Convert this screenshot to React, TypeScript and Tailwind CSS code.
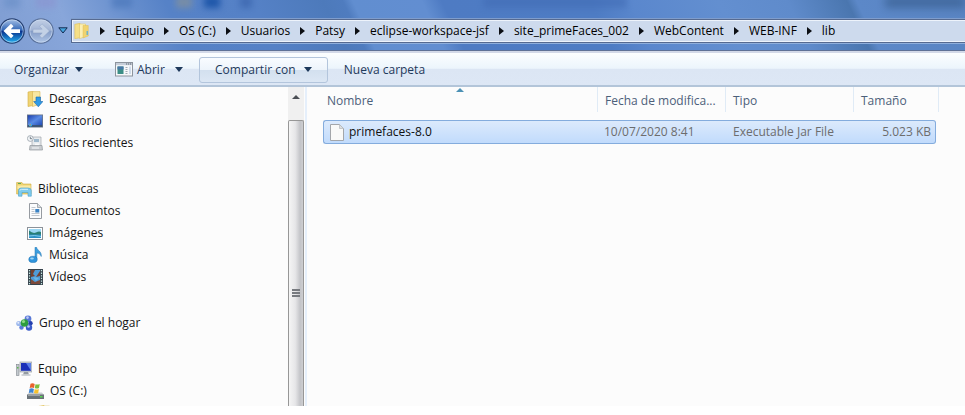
import { Fragment, type ReactNode } from "react";

const FolderIcon = () => (
  <svg viewBox="0 0 16 16" className="size-4 shrink-0" aria-hidden="true">
    <path d="M.8 1.300 L6 .3 V14.700 L.8 15.700Z" fill="#f5df86" stroke="#dcb94e" strokeWidth=".5" />
    <path d="M5.500 1 H11.500 V13.500 L5.500 15.700Z" fill="#fbefb4" stroke="#dfc05f" strokeWidth=".5" />
    <path d="M9 2.500 H14.300 V13 L9 15Z" fill="#f0d36f" stroke="#d8b54b" strokeWidth=".4" />
    <path d="M12.500 8 h1.500 v4 h-1.500z" fill="#6fb4c8" />
  </svg>
);

const DownloadsIcon = () => (
  <svg viewBox="0 0 16 16" className="size-4 shrink-0" aria-hidden="true">
    <path d="M1 1 L6 .2 V14.500 L1 15.500Z" fill="#f0d474" stroke="#d3ac42" strokeWidth=".6" />
    <path d="M5.500 .6 H13 V13 L5.500 15.600Z" fill="#f9e8a1" stroke="#d9b650" strokeWidth=".6" />
    <path d="M9 6 h4.500 v4.500 h2.400 L11.300 15.800 L6.700 10.500 H9z" fill="#2f9ae6" stroke="#1767ac" strokeWidth=".6" />
  </svg>
);

const DesktopIcon = () => (
  <svg viewBox="0 0 16 16" className="size-4 shrink-0" aria-hidden="true">
    <defs>
      <linearGradient id="desk" x1="0" y1="0" x2="1" y2="1">
        <stop offset="0" stopColor="#1c3fae" />
        <stop offset=".5" stopColor="#5a8be4" />
        <stop offset="1" stopColor="#1f49b4" />
      </linearGradient>
    </defs>
    <rect x="0" y="1.500" width="16" height="13" fill="#6b7788" />
    <rect x=".8" y="2.300" width="14.400" height="10.200" fill="url(#desk)" />
    <rect x=".8" y="12.200" width="14.400" height="1.600" fill="#36506f" />
    <circle cx="3.500" cy="12" r="1.600" fill="#37b6e8" />
    <circle cx="3.200" cy="11.800" r=".7" fill="#e9704a" />
  </svg>
);

const RecentIcon = () => (
  <svg viewBox="0 0 16 16" className="size-4 shrink-0" aria-hidden="true">
    <path d="M5 2 h9 v9 h-9z" fill="#e6eaed" stroke="#a1a8ae" strokeWidth=".7" />
    <path d="M7 4 h5 v3 h-5z" fill="#9db8cc" />
    <path d="M8 8.500 h4 v2 h-4z" fill="#f9fafb" />
    <path d="M3 10.500 h12 l.5 4.500 h-13z" fill="#c9cdd1" stroke="#94999e" strokeWidth=".7" />
    <path d="M5 13 h7" stroke="#f4f6f7" strokeWidth="1" />
    <circle cx="3.300" cy="3.500" r="2.900" fill="#f3f6f8" stroke="#98a1a9" strokeWidth=".8" />
    <path d="M3.300 1.700 V3.700 H5" fill="none" stroke="#46525e" strokeWidth=".7" />
  </svg>
);

const LibrariesIcon = () => (
  <svg viewBox="0 0 16 16" className="size-4 shrink-0" aria-hidden="true">
    <path d="M.6 1.500 H6 L7 3 H15 V13 H.6Z" fill="#efd36f" stroke="#cfac45" strokeWidth=".6" />
    <path d="M1.500 4.500 H14.500 V8 H1.500z" fill="#fbeaa5" />
    <path d="M2 2.500 h3" stroke="#61aa55" strokeWidth="1" />
    <path d="M2.500 15.200 V9.500 Q2.500 7 5 7 H12 Q15.300 7 15.300 9.500 V15.200 H12 V11.500 H6 V15.200Z" fill="#7fcbee" stroke="#4a9fc8" strokeWidth=".6" />
    <path d="M4 9.500 Q4 8.300 5.500 8.300 H12" fill="none" stroke="#d8f2fc" strokeWidth="1" />
  </svg>
);

const DocumentIcon = () => (
  <svg viewBox="0 0 16 16" className="size-4 shrink-0" aria-hidden="true">
    <path d="M2.500 .5 H10.500 L14.500 4.500 V15.500 H2.500Z" fill="#fbfcfd" stroke="#969ba1" strokeWidth="1" />
    <path d="M10.500 .5 V4.500 H14.500" fill="#d9dde2" stroke="#8b9096" strokeWidth=".7" />
    <path d="M4.500 4.500 h4 M4.500 6.500 h3 M4.500 8.500 h3 M4.500 10.500 h8 M4.500 12.500 h8" stroke="#b3b9c1" strokeWidth=".8" />
    <rect x="8.300" y="6" width="4" height="3.500" fill="#3a82c4" />
  </svg>
);

const PicturesIcon = () => (
  <svg viewBox="0 0 16 16" className="size-4 shrink-0" aria-hidden="true">
    <rect x=".5" y="2.500" width="15" height="12" fill="#fff" stroke="#8c9299" />
    <rect x="2" y="4" width="12" height="9" fill="#9bd7f3" />
    <path d="M2 5.500 Q6 9 9 7.500 T14 7 V10 H2z" fill="#2b7f74" />
    <path d="M2 9.500 H14 V13 H2z" fill="#2c8fc4" />
    <path d="M2 11 Q7 9.800 14 11.500" fill="none" stroke="#9adcf0" strokeWidth=".8" />
  </svg>
);

const MusicIcon = () => (
  <svg viewBox="0 0 16 16" className="size-4 shrink-0" aria-hidden="true">
    <path d="M8 .3 H9.600 C10 3.500 15 4.200 14.200 9.500 C13.600 7.200 12 6.200 9.800 6 V12.200 H8z" fill="#3d9fdf" stroke="#2274b1" strokeWidth=".5" />
    <ellipse cx="6" cy="12.400" rx="4.200" ry="3.200" fill="#2f94dc" stroke="#2070ad" strokeWidth=".5" />
    <ellipse cx="5" cy="11.400" rx="1.900" ry="1" fill="#9fd7f7" />
  </svg>
);

const VideosIcon = () => (
  <svg viewBox="0 0 16 16" className="size-4 shrink-0" aria-hidden="true">
    <rect x="1" y="0" width="15" height="16" fill="#38444d" />
    <rect x="4" y="1" width="9" height="14" fill="#4f9bd8" />
    <path d="M4 1 h4 l-2 4 2 2 -4 1z M13 2 v5 l-4 1z" fill="#75402f" />
    <path d="M4 10 l4 3 5-2 v4 h-9z" fill="#7c4a3a" />
    <path d="M6 8 l6 1 -3 3z" fill="#67b7e8" />
    <path d="M2.500 1 V16 M14.500 1 V16" stroke="#c4e5e2" strokeWidth="1.200" strokeDasharray="1.300 1.300" />
  </svg>
);

const HomegroupIcon = () => (
  <svg viewBox="0 0 17 16" className="h-4 w-[17px] shrink-0" aria-hidden="true">
    <circle cx="2.800" cy="8.500" r="2.600" fill="#9db8ec" />
    <circle cx="12" cy="3.800" r="3.400" fill="#5878d6" />
    <circle cx="14.500" cy="8.300" r="2.200" fill="#243fae" />
    <circle cx="13" cy="12.500" r="3.200" fill="#3c5cc9" />
    <circle cx="5.500" cy="12.500" r="2.200" fill="#5a7cd7" />
    <circle cx="8.500" cy="8" r="3.800" fill="#2e9d3e" />
    <circle cx="7.500" cy="6.500" r="1.600" fill="#8edb83" />
    <circle cx="11.500" cy="2.600" r="1.300" fill="#b9c9f5" />
    <circle cx="12.500" cy="11.500" r="1.300" fill="#b9c9f5" />
    <circle cx="2.300" cy="7.700" r="1" fill="#e3ebfb" />
  </svg>
);

const ComputerIcon = () => (
  <svg viewBox="0 0 16 16" className="size-4 shrink-0" aria-hidden="true">
    <rect x=".5" y="3.500" width="2.500" height="11" fill="#c3c9ce" stroke="#7f868d" strokeWidth=".6" />
    <rect x="1" y="6" width="1.500" height="1.500" fill="#5cb451" />
    <rect x="4" y="1" width="12" height="10" fill="#cfd4da" stroke="#8b929a" strokeWidth=".6" />
    <rect x="5" y="2" width="10" height="7.800" fill="#1a2fb8" />
    <path d="M10 2 h5 v7.800 z" fill="#5b7fe8" />
    <path d="M8 11 h4 l1 2.500 h-6z" fill="#949ba2" />
    <path d="M5.500 13.300 h9 v1.500 h-9z" fill="#c2c7cc" />
  </svg>
);

const DriveIcon = () => (
  <svg viewBox="0 0 17 17" className="size-[17px] shrink-0" aria-hidden="true">
    <path d="M2 9.500 H15 L17 12 H0z" fill="#c7ccd1" />
    <path d="M0 11.500 H17 V16 H0z" fill="#6a7278" />
    <path d="M1 12.500 h12" stroke="#a6adb2" strokeWidth=".8" />
    <rect x="13" y="13" width="2.500" height="1.500" fill="#55d650" />
    <path d="M3.500 .8 Q5.500 -.3 7.700 1 L7 5 Q5 3.900 2.700 5z" fill="#e8622c" />
    <path d="M8.500 1.200 Q10.500 2 12.700 1 L12 5 Q10 6 7.800 5z" fill="#7fbd3d" />
    <path d="M2.500 5.800 Q4.800 4.700 6.900 6 L6.200 10 Q4 8.900 1.800 10z" fill="#3f86d4" />
    <path d="M7.700 6 Q9.800 7 11.900 6 L11.200 10 Q9 11 7 10z" fill="#f5c12f" />
  </svg>
);

const AppIcon = () => (
  <svg viewBox="0 0 18 15" className="h-[15px] w-[18px] shrink-0" aria-hidden="true">
    <rect x=".5" y=".5" width="17" height="13.500" fill="#f6f8fa" stroke="#8c949d" />
    <rect x="1" y="1" width="16" height="2.200" fill="#c5ced9" />
    <path d="M11 2 h1.200 M13 2 h1.200 M15 2 h1.200" stroke="#58636f" strokeWidth="1" />
    <rect x="2.500" y="4.500" width="6" height="7.500" fill="#3b8e86" />
    <rect x="2.500" y="4.500" width="6" height="3" fill="#4777a6" />
    <path d="M10.500 5.500 h2 M10.500 7.500 h2 M10.500 9.500 h2 M10.500 11.500 h2" stroke="#8e98a3" strokeWidth=".8" />
    <rect x="14" y="4.500" width="2" height="7.500" fill="#cfdceb" />
  </svg>
);

const FileIcon = () => (
  <svg viewBox="0 0 14 17" className="h-[17px] w-[14px] shrink-0" aria-hidden="true">
    <path d="M.5 .5 H9.500 L13.500 4.500 V16.500 H.5Z" fill="#f9f9f8" stroke="#a3a6aa" />
    <path d="M9.500 .5 V4.500 H13.500Z" fill="#dcdedf" stroke="#b5b8bb" strokeWidth=".7" />
  </svg>
);

const NavButton = ({ label, active }: { label: string; active?: boolean }) => {
  const id = active ? "navBack" : "navForward";
  return (
    <button type="button" aria-label={label} className="shrink-0">
      <svg viewBox="0 0 26 26" className="size-[26px]" aria-hidden="true">
        <defs>
          <linearGradient id={id} x1="0" y1="0" x2="0" y2="1">
            <stop offset="0" stopColor={active ? "#a9c3e8" : "#c3d0e6"} />
            <stop offset=".46" stopColor={active ? "#3367b6" : "#a3b5d5"} />
            <stop offset=".52" stopColor={active ? "#0a3590" : "#859dc8"} />
            <stop offset="1" stopColor={active ? "#25b4f4" : "#b2c8e8"} />
          </linearGradient>
        </defs>
        <circle cx="13" cy="13" r="12.200" fill={`url(#${id})`} stroke={active ? "#263f70" : "#5a719b"} strokeWidth="1.200" />
        <circle cx="13" cy="13" r="11.200" fill="none" stroke="#d2e2f5" strokeOpacity=".65" strokeWidth=".9" />
        <path
          d={active ? "M4.500 13 L12 5.800 L14.500 8.300 L11.800 11.200 H21 V14.900 H11.800 L14.500 17.800 L12 20.200Z" : "M21.500 13 L14 5.800 L11.500 8.300 L14.200 11.200 H5 V14.900 H14.200 L11.500 17.800 L14 20.200Z"}
          fill={active ? "#fff" : "#c3d1e6"}
          stroke={active ? "none" : "#8ea2c5"}
          strokeWidth=".5"
        />
      </svg>
    </button>
  );
};

const Caret = () => (
  <svg viewBox="0 0 8 5" className="h-[5px] w-2 shrink-0" aria-hidden="true">
    <path d="M0 0 H8 L4 5Z" fill="#1e395b" />
  </svg>
);

const Chevron = () => (
  <svg viewBox="0 0 5 8" className="h-2 w-[5px] shrink-0" aria-hidden="true">
    <path d="M0 0 L5 4 L0 8Z" fill="#0c0f14" />
  </svg>
);

/* Shapes of the windows behind the translucent title bar. */
const GlassShapes = () => (
  <div className="pointer-events-none absolute inset-x-0 top-0 h-[17px] overflow-hidden" aria-hidden="true">
    <i className="absolute -top-1 left-1 h-3 w-4 bg-[#6b90c8] opacity-70 blur-[3px]" />
    <i className="absolute -top-1 left-9 h-3 w-5 bg-[#8a97d2] opacity-80 blur-[3px]" />
    <i className="absolute -top-1 left-28 h-3 w-5 bg-[#4b78bb] opacity-70 blur-[3px]" />
    <i className="absolute -top-1 left-44 h-3 w-4 bg-[#80909f] opacity-80 blur-[3px]" />
    <i className="absolute -top-1 left-[204px] h-3 w-4 bg-[#1f57aa] blur-[3px]" />
    <i className="absolute -top-1 left-60 h-3 w-3 bg-[#3d68b0] opacity-80 blur-[3px]" />
    <i className="absolute -top-1 left-1/2 h-3 w-36 bg-[#416cb5] opacity-60 blur-[3px]" />
    <i className="absolute -top-1 right-0 h-3 w-20 bg-[#3c6396] opacity-80 blur-[4px]" />
  </div>
);

const path = ["Equipo", "OS (C:)", "Usuarios", "Patsy", "eclipse-workspace-jsf", "site_primeFaces_002", "WebContent", "WEB-INF", "lib"];

type Place = { label: string; icon: ReactNode };
type Group = { head?: Place; items: Place[] };

const groups: Group[] = [
  {
    items: [
      { label: "Descargas", icon: <DownloadsIcon /> },
      { label: "Escritorio", icon: <DesktopIcon /> },
      { label: "Sitios recientes", icon: <RecentIcon /> },
    ],
  },
  {
    head: { label: "Bibliotecas", icon: <LibrariesIcon /> },
    items: [
      { label: "Documentos", icon: <DocumentIcon /> },
      { label: "Imágenes", icon: <PicturesIcon /> },
      { label: "Música", icon: <MusicIcon /> },
      { label: "Vídeos", icon: <VideosIcon /> },
    ],
  },
  { head: { label: "Grupo en el hogar", icon: <HomegroupIcon /> }, items: [] },
  { head: { label: "Equipo", icon: <ComputerIcon /> }, items: [{ label: "OS (C:)", icon: <DriveIcon /> }] },
];

const row = "flex h-[22px] w-full items-center gap-[6px] whitespace-nowrap text-left";

const headCell = "h-[25px] border-r border-[#e0ebf6] p-0 pt-[3px] text-left font-normal";

export default function App() {
  return (
    <div className="flex h-screen flex-col overflow-hidden bg-white pb-[9px] font-['Open_Sans','Noto_Sans',sans-serif] text-[12px] leading-4 text-[#151515]">
      <header className="relative shrink-0 border-b border-[#5f7196] bg-[linear-gradient(65deg,#7f9dd2_0%,#88a6da_8%,#6c92cf_14%,#5682c7_19%,#5581c6_28%,#4d7abb_35%,#4f7cbf_37%,#618ed0_38%,#628ed1_45%,#4e7bc3_47%,#4e7cc4_62%,#5a87cd_66%,#638fd0_75%,#5f8bcb_82%,#4a76af_88%,#5c88c8_89%,#5984c2_100%)] pt-[17px] pb-[6px]">
        <GlassShapes />
        <nav aria-label="Ruta" className="relative flex h-[27px] items-center">
          <div className="flex shrink-0 items-center gap-1 pr-[3px]">
            <div className="-ml-px flex gap-[3px]">
              <NavButton label="Atrás" active />
              <NavButton label="Adelante" />
            </div>
            <button type="button" aria-label="Páginas recientes">
              <svg viewBox="0 0 10 7" className="h-[7px] w-[10px]" aria-hidden="true">
                <path d="M.8 .8 H9.200 L5 6Z" fill="#45a5df" stroke="#142c51" />
              </svg>
            </button>
          </div>
          <div className="flex h-6 flex-1 items-center border border-r-0 border-[#566a90] bg-[#cddaed] pl-[2px] text-black shadow-[inset_1px_1px_0_#edf3fb,inset_0_-1px_0_#edf3fb,0_-1px_0_#7f9dcc,0_1px_0_#8fafdc]">
            <FolderIcon />
            {path.map((name) => (
              <Fragment key={name}>
                <span className="pr-[10px] pl-[10px]">
                  <Chevron />
                </span>
                <button type="button" className="whitespace-nowrap">
                  {name}
                </button>
              </Fragment>
            ))}
          </div>
        </nav>
      </header>

      <div className="flex h-9 shrink-0 items-center border-b-2 border-[#b3c5d9] border-t-2 border-t-[#d3d9e8] bg-[linear-gradient(#fcfeff_0%,#ecf5fc_48%,#dce6f4_50%,#dde7f5_100%)] pt-px text-[#1e395b]">
        <button type="button" className="flex items-center gap-[6px] pl-[14px]">
          Organizar <Caret />
        </button>
        <button type="button" className="flex items-center gap-1 pl-8">
          <AppIcon /> <span className="pr-[6px]">Abrir</span> <Caret />
        </button>
        <button
          type="button"
          className="ml-4 flex h-[26px] w-[129px] items-center justify-center gap-2 rounded-[3px] border border-[#b3c5dc] bg-[linear-gradient(#f9fcff_0%,#edf4fb_50%,#d3e0ef_52%,#dce7f4_100%)]"
        >
          Compartir con <Caret />
        </button>
        <button type="button" className="pl-4">
          Nueva carpeta
        </button>
      </div>

      <div className="flex min-h-0 flex-1 bg-[#fcfcfc]">
        <aside className="flex w-72 shrink-0 flex-col gap-6 overflow-hidden pt-px">
          {groups.map((group, i) => (
            <div key={i} className="shrink-0">
              {group.head && (
                <button type="button" className={`${row} pl-4`}>
                  {group.head.icon} {group.head.label}
                </button>
              )}
              {group.items.map((item) => (
                <button key={item.label} type="button" className={`${row} pl-[27px]`}>
                  {item.icon} {item.label}
                </button>
              ))}
              {i === groups.length - 1 && (
                <button type="button" aria-label="Carpeta" className={`${row} pl-[38px]`}>
                  <FolderIcon />
                </button>
              )}
            </div>
          ))}
        </aside>

        <div className="flex w-4 shrink-0 flex-col bg-[#f0f0f0]">
          <div className="flex h-[33px] items-start justify-center pt-2">
            <svg viewBox="0 0 8 4" className="h-1 w-2" aria-hidden="true">
              <path d="M0 4 L4 0 L8 4Z" fill="#4b4f55" />
            </svg>
          </div>
          <div className="flex flex-1 items-center justify-center rounded-t-[2px] border border-b-0 border-[#979797] bg-[linear-gradient(90deg,#f5f5f5_0%,#e6e6e8_45%,#c3c4c8_80%,#cdced1_100%)] pt-[58px]">
            <div className="flex flex-col gap-px">
              <i className="h-[2px] w-2 bg-[#777a7f]" />
              <i className="h-[2px] w-2 bg-[#777a7f]" />
              <i className="h-[2px] w-2 bg-[#777a7f]" />
            </div>
          </div>
        </div>

        <main className="ml-px min-w-0 flex-1 overflow-hidden border-l-2 border-[#e5effb] pl-4">
          <table className="w-[616px] table-fixed border-separate border-spacing-0">
            <colgroup>
              <col className="w-[275px]" />
              <col className="w-32" />
              <col className="w-32" />
              <col className="w-[82px]" />
              <col className="w-[3px]" />
            </colgroup>
            <thead className="text-[#4c607a]">
              <tr>
                <th className={`${headCell} relative pl-1`}>
                  <svg viewBox="0 0 8 4" className="absolute top-px left-1/2 h-1 w-2 -translate-x-1/2" aria-hidden="true">
                    <path d="M0 4 L4 0 L8 4Z" fill="#4c91b5" />
                  </svg>
                  Nombre
                </th>
                <th className={`${headCell} pl-[7px] whitespace-nowrap`}>Fecha de modifica...</th>
                <th className={`${headCell} pl-[7px]`}>Tipo</th>
                <th colSpan={2} className={`${headCell} pl-[7px]`}>
                  Tamaño
                </th>
              </tr>
              <tr aria-hidden="true">
                <td colSpan={5} className="h-2 p-0" />
              </tr>
            </thead>
            <tbody className="text-[#6d6d6d]">
              <tr className="[&>td]:h-6 [&>td]:border-y [&>td]:border-[#84acdd] [&>td]:bg-[linear-gradient(#dceafc,#c1dbfc)] [&>td]:p-0 [&>td]:whitespace-nowrap">
                <td className="rounded-l-[3px] border-l text-[#101010]">
                  <div className="flex items-center gap-[5px] pl-[6px]">
                    <FileIcon /> primefaces-8.0
                  </div>
                </td>
                <td>
                  <div className="pl-[6px]">10/07/2020 8:41</div>
                </td>
                <td>
                  <div className="pl-[7px]">Executable Jar File</div>
                </td>
                <td className="rounded-r-[3px] border-r text-right">
                  <div className="pr-1">5.023 KB</div>
                </td>
              </tr>
            </tbody>
          </table>
        </main>
      </div>
    </div>
  );
}
